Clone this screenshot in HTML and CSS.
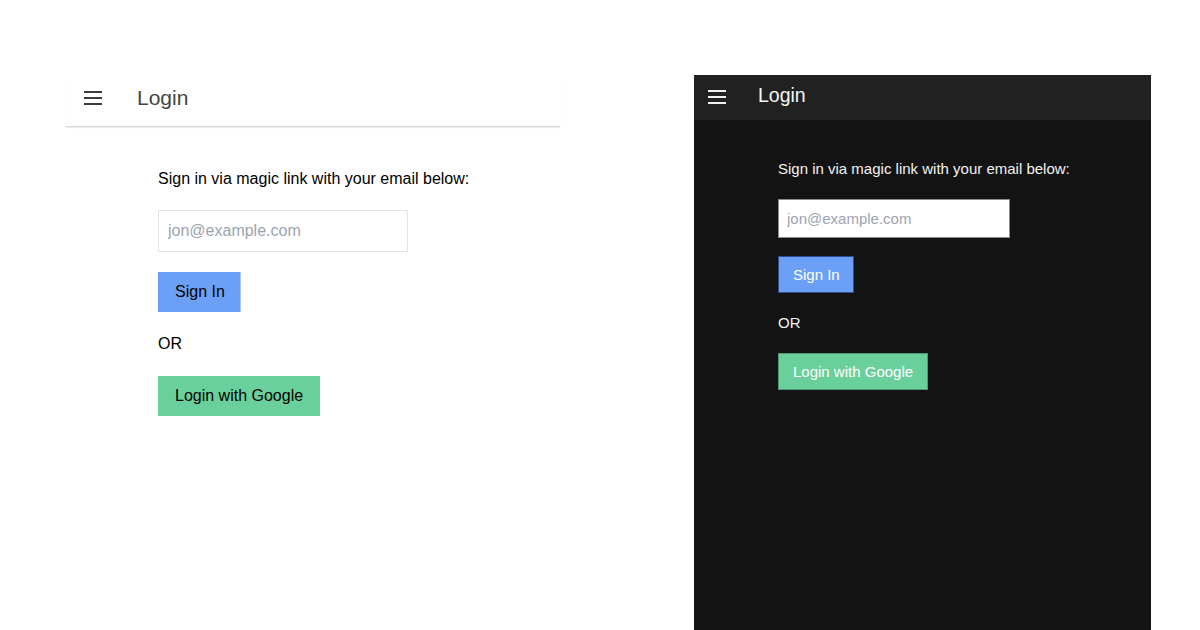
FILE: index.html
```html
<!DOCTYPE html>
<html lang="en">
<head>
<meta charset="utf-8">
<title>Login</title>
<link rel="stylesheet" href="styles.css">
</head>
<body>
<div class="page">
  <section class="panel light">
    <header class="bar">
      <svg class="menu" width="18" height="14" viewBox="0 0 18 14" aria-hidden="true">
        <rect x="0" y="0" width="18" height="2"/>
        <rect x="0" y="6" width="18" height="2"/>
        <rect x="0" y="12" width="18" height="2"/>
      </svg>
      <h1 class="title">Login</h1>
    </header>
    <main class="content">
      <p class="intro">Sign in via magic link with your email below:</p>
      <input class="email" type="email" placeholder="jon@example.com">
      <button class="btn btn-blue">Sign In</button>
      <p class="or">OR</p>
      <button class="btn btn-green">Login with Google</button>
    </main>
  </section>
  <section class="panel dark">
    <header class="bar">
      <svg class="menu" width="18" height="14" viewBox="0 0 18 14" aria-hidden="true">
        <rect x="0" y="0" width="18" height="2"/>
        <rect x="0" y="6" width="18" height="2"/>
        <rect x="0" y="12" width="18" height="2"/>
      </svg>
      <h1 class="title">Login</h1>
    </header>
    <main class="content">
      <p class="intro">Sign in via magic link with your email below:</p>
      <input class="email" type="email" placeholder="jon@example.com">
      <button class="btn btn-blue">Sign In</button>
      <p class="or">OR</p>
      <button class="btn btn-green">Login with Google</button>
    </main>
  </section>
</div>
</body>
</html>
```

FILE: styles.css
```css
* { box-sizing: border-box; }
html, body { margin: 0; padding: 0; background: #ffffff; }
body { font-family: "Liberation Sans", Arial, sans-serif; width: 1200px; height: 630px; overflow: hidden; }

.page {
  display: flex;
  align-items: flex-start;
  padding-top: 75px;
  padding-left: 66px;
  gap: 134px;
  height: 630px;
}

.panel { display: flex; flex-direction: column; }

.title { margin: 0; font-weight: normal; }

.content { display: flex; flex-direction: column; align-items: flex-start; }

.intro, .or { margin: 0; }

.email {
  font-family: inherit;
  background: #fff;
  outline: none;
}
.email::placeholder { color: #9ca3af; opacity: 1; }

.btn {
  font-family: inherit;
  cursor: pointer;
  padding: 0 16px;
}

/* ---------- light ---------- */
.light { width: 494px; }
.light .bar {
  height: 51px;
  display: flex;
  align-items: center;
  padding-left: 18px;
  background: #fff;
  box-shadow: 0 1px 0 #d6d6d6, 0 2px 1px rgba(0, 0, 0, 0.07);
}
.light .menu { display: block; fill: #3c3c3c; margin-top: -5px; }
.light .title { font-size: 21px; color: #454545; margin-left: 35px; margin-top: -6px; }
.light .content { padding: 43px 0 0 92px; }
.light .intro { font-size: 16px; line-height: 20px; color: #000; }
.light .email {
  margin-top: 21px;
  width: 250px;
  height: 42px;
  border: 1px solid #e3e4e6;
  padding: 0 9px;
  font-size: 16px;
}
.light .btn { height: 40px; font-size: 16px; color: #000; }
.light .btn-blue { margin-top: 20px; background: #6ca0f6; border: 1px solid #6ca0f6; border-right-color: #a9c7fa; padding: 0 15px 0 16px; }
.light .or { margin-top: 22px; font-size: 16px; line-height: 20px; color: #000; }
.light .btn-green { margin-top: 22px; background: #69d09c; border: 1px solid #69d09c; }

/* ---------- dark ---------- */
.dark { width: 457px; height: 555px; background: #131313; }
.dark .bar {
  height: 45px;
  display: flex;
  align-items: center;
  padding-left: 14px;
  background: #212121;
}
.dark .menu { display: block; fill: #f0f0f0; margin-top: -2px; }
.dark .title { font-size: 19.5px; color: #f5f5f5; margin-left: 32px; margin-top: -5px; }
.dark .content { padding: 40px 0 0 84px; }
.dark .intro { font-size: 15px; line-height: 18px; color: #f2f2f2; }
.dark .email {
  margin-top: 21px;
  width: 232px;
  height: 39px;
  border: 1px solid #8a8a8a;
  padding: 0 8px;
  font-size: 15px;
}
.dark .btn { height: 37px; font-size: 15px; color: #fff; padding: 0 14px 0 14px; }
.dark .btn-blue { margin-top: 18px; background: #6ca0f6; border: 1px solid #2f4f8c; padding: 0 13px 0 14px; }
.dark .or { margin-top: 21px; font-size: 15px; line-height: 18px; color: #f2f2f2; }
.dark .btn-green { margin-top: 21px; background: #69d09c; border: 1px solid #4d9a73; }
```
